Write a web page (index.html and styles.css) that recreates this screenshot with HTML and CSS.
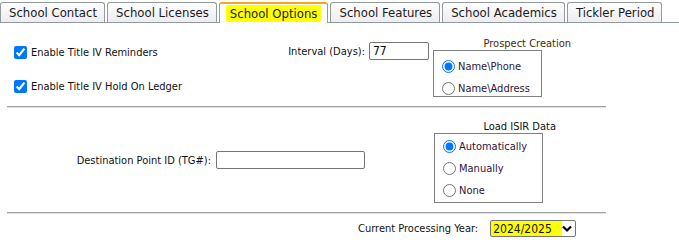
FILE: index.html
```
<!DOCTYPE html>
<html lang="en">
<head>
    <meta charset="UTF-8">
    <meta name="viewport" content="width=device-width, initial-scale=1.0">
    <title>School Options</title>
    <link rel="stylesheet" href="styles.css">
</head>
<body>

    <div class="tabs">
        <div class="tab">School Contact</div>
        <div class="tab">School Licenses</div>
        <div class="tab active"><span class="marker">School Options</span></div>
        <div class="tab">School Features</div>
        <div class="tab">School Academics</div>
        <div class="tab">Tickler Period</div>
    </div>

    <div class="page">
        <div class="section first">
            <div class="checks">
                <label class="check"><input type="checkbox" checked>Enable Title IV Reminders</label>
                <label class="check"><input type="checkbox" checked>Enable Title IV Hold On Ledger</label>
            </div>
            <div class="field interval">
                <span>Interval (Days):</span>
                <input type="text" class="short" value="77">
            </div>
            <div class="group">
                <div class="group-title brown">Prospect Creation</div>
                <div class="group-box">
                    <label class="radio"><input type="radio" name="prospect" checked>Name\Phone</label>
                    <label class="radio"><input type="radio" name="prospect">Name\Address</label>
                </div>
            </div>
        </div>

        <hr>

        <div class="section second">
            <div class="field dest">
                <span>Destination Point ID (TG#):</span>
                <input type="text" class="long">
            </div>
            <div class="group isir-group">
                <div class="group-title">Load ISIR Data</div>
                <div class="group-box isir">
                    <label class="radio"><input type="radio" name="isir" checked>Automatically</label>
                    <label class="radio"><input type="radio" name="isir">Manually</label>
                    <label class="radio"><input type="radio" name="isir">None</label>
                </div>
            </div>
        </div>

        <hr>

        <div class="section year">
            <span>Current Processing Year:</span>
            <span class="select-wrap">
                <select class="year-select">
                    <option>2024/2025</option>
                    <option>2023/2024</option>
                </select>
                <svg class="chevron" width="10" height="8" viewBox="0 0 10 8"><path d="M1 1.5 L5 5.5 L9 1.5" fill="none" stroke="#000" stroke-width="2.2"/></svg>
            </span>
        </div>
    </div>

</body>
</html>
```

FILE: styles.css
```
body {
    font-family: "DejaVu Sans Condensed", "DejaVu Sans", sans-serif;
    font-size: 11px;
    color: #111;
    margin: 0;
    padding: 0;
    background: #fff;
}
.tabs {
    display: flex;
    gap: 2px;
    padding-top: 2px;
    border-bottom: 1px solid #919b9c;
    height: 20px;
}
.tab {
    height: 19px;
    line-height: 19px;
    padding: 0 7px 0 8px;
    font-size: 13px;
    color: #1a1a1a;
    border: 1px solid #919b9c;
    border-bottom: none;
    border-radius: 3px 3px 0 0;
    background: linear-gradient(#ffffff, #ececf2);
}
.tab.active {
    background: #fff;
    border-top: 2px solid #f5a623;
    height: 19px;
    margin-bottom: -1px;
    padding: 0 6px;
}
.marker {
    background: #ffff00;
    padding: 1px 4px;
    border-radius: 2px;
}
.page {
    width: 606px;
}
.section {
    display: flex;
    align-items: flex-start;
}
.first {
    height: 83px;
}
.checks {
    width: 268px;
    padding: 21px 0 0 12px;
    display: flex;
    flex-direction: column;
    gap: 18px;
}
.check {
    display: flex;
    align-items: center;
    height: 16px;
}
.check input {
    margin: 0 4px 0 2px;
    width: 13px;
    height: 13px;
}
.field {
    display: flex;
    align-items: center;
    justify-content: flex-end;
    gap: 4px;
}
.interval {
    width: 149px;
    margin-top: 19px;
}
input[type="text"] {
    font-family: inherit;
    font-size: 12px;
    height: 18px;
    box-sizing: border-box;
    border: 1px solid #767676;
    border-radius: 2px;
    padding: 0 3px;
}
.short {
    width: 60px;
}
.long {
    width: 149px;
}
.group {
    width: 138px;
    margin-left: 4px;
    padding-top: 14px;
}
.group-title {
    text-align: right;
    height: 13px;
}
.brown {
    color: #3d2a10;
}
.group-box {
    width: 109px;
    box-sizing: border-box;
    height: 47px;
    border: 1px solid #808080;
    padding: 9px 0 0 8px;
    display: flex;
    flex-direction: column;
    gap: 9px;
}
.radio {
    display: flex;
    align-items: center;
    color: #2e1638;
}
.radio input {
    margin: 0 3px 0 0;
    width: 13px;
    height: 13px;
}
.isir {
    height: 70px;
    padding: 6px 0 0 8px;
    gap: 9px;
}
hr {
    margin: 0 0 0 7px;
    border: none;
    border-top: 1px solid #a0a0a0;
    border-bottom: 1px solid #e2e2e2;
}
.second {
    height: 102px;
    padding-top: 2px;
}
.dest {
    width: 365px;
    margin-top: 41px;
    gap: 5px;
}
.second .isir-group {
    width: 122px;
    margin-left: 69px;
    padding-top: 10px;
}
.year {
    padding: 6px 0 0 358px;
    align-items: center;
    gap: 12px;
}
.select-wrap {
    position: relative;
    display: inline-block;
}
.year-select {
    appearance: none;
    font-family: inherit;
    font-size: 12px;
    width: 86px;
    height: 17px;
    padding: 0 0 0 2px;
    border: 1px solid #767676;
    border-radius: 2px;
    background: linear-gradient(to right, #ffff00 71px, #fff 71px);
    color: #111;
}
.chevron {
    position: absolute;
    right: 4px;
    top: 5px;
    pointer-events: none;
}
```
